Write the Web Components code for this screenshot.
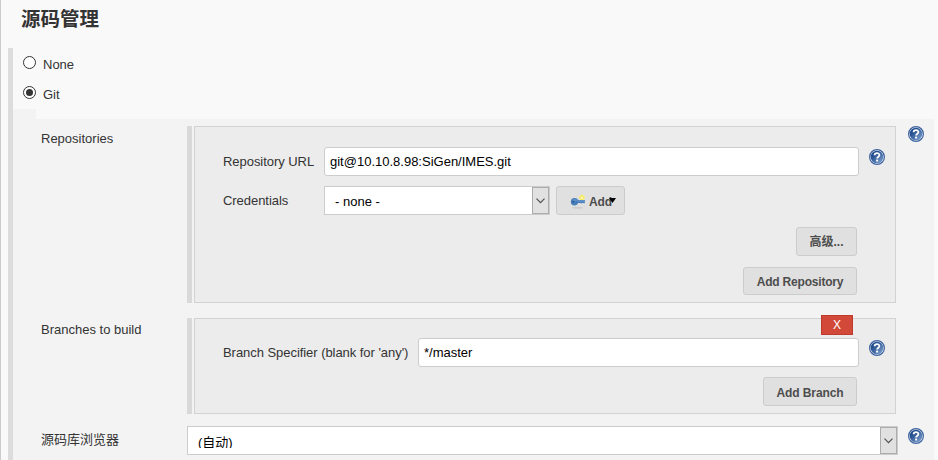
<!DOCTYPE html>
<html lang="zh"><head><meta charset="utf-8"><title>源码管理</title>
<style>
html,body{margin:0;height:460px;overflow:hidden;background:#f9f9f9}
body{font:13px/18px "Liberation Sans","Noto Sans CJK SC",sans-serif;color:#333}
</style></head><body>
<scm-page></scm-page>
<script>
const define = (name, html) => customElements.define(name, class extends HTMLElement {
  constructor() {
    super();
    const t = document.createElement('template');
    t.innerHTML = html;
    this.attachShadow({mode: 'open'}).append(t.content.cloneNode(true));
  }
});

define('help-icon', `<style>:host{display:block;width:16px;height:16px}svg{display:block}</style>
<svg width="16" height="16" viewBox="0 0 16 16"><defs><linearGradient id="g" x1="0" y1="0" x2="1" y2="1"><stop offset=".3" stop-color="#254f8e"/><stop offset="1" stop-color="#86a8d4"/></linearGradient></defs>
<circle cx="8" cy="8" r="7.4" fill="#e6edf6" stroke="#3d639f" stroke-width="1.2"/><circle cx="8" cy="8" r="6.3" fill="url(#g)"/>
<path d="M5.6 6.2C5.7 3.5 10.4 3.5 10.4 6.1C10.4 7.7 8.1 7.7 8.1 9.6" fill="none" stroke="#fff" stroke-width="1.8"/><rect x="7.1" y="10.6" width="2" height="1.9" fill="#fff"/></svg>`);

define('radio-option', `<style>:host{display:flex;align-items:center;height:18px;gap:7px}
i{box-sizing:border-box;width:13px;height:13px;border:1px solid #333;border-radius:50%;background:#fff;margin-top:-4px;display:grid;place-items:center}
span{padding-top:2px}
:host([checked]) i::after{content:"";width:7px;height:7px;border-radius:50%;background:#333}</style><i></i><span><slot></slot></span>`);

define('text-field', `<style>:host{box-sizing:border-box;display:block;height:29px;border:1px solid #ccc;border-radius:3px;background:#fff;color:#000;padding:5px 5px;line-height:17px;white-space:pre}</style><slot></slot>`);

define('drop-down', `<style>:host{box-sizing:border-box;display:flex;height:29px;border:1px solid #ccc;background:#fff;color:#000}
span{flex:1;padding:var(--st,6px) 0 0 10px;line-height:17px;height:var(--sh,16px);overflow:hidden}
b{box-sizing:border-box;width:17px;border:1px solid #acacac;background:#e1e1e1;display:grid;place-items:center}</style><span><slot></slot></span>
<b><svg width="9" height="6" viewBox="0 0 9 6"><path d="M.5 .7L4.5 4.7L8.5 .7" fill="none" stroke="#505050" stroke-width="1.2"/></svg></b>`);

define('push-button', `<style>:host{box-sizing:border-box;display:flex;justify-content:center;align-items:center;height:29px;border:1px solid #ccc;border-radius:3px;background:#e0e0e0;color:#4d4d4d;font-size:12px;font-weight:bold;padding-top:2px;letter-spacing:var(--ls,0)}</style><slot></slot>`);

define('key-icon', `<style>:host{display:block;width:16px;height:16px}svg{display:block}</style>
<svg width="16" height="16"><ellipse cx="7.5" cy="13.8" rx="5.5" ry="1" fill="#cdcdcd"/><circle cx="12" cy="3.6" r="2.8" fill="#f7ee8a"/><path d="M12 .6L12.9 2.5L15 3.6L12.9 4.6L12 6.6L11.1 4.6L9 3.6L11.1 2.5Z" fill="#f3e13c"/><circle cx="12" cy="3.6" r="1.2" fill="#fffcc8"/>
<path d="M4.6 3.9C6.4 3.9 7.6 4.8 8.2 6.1H14.8V9.3H13.6L12.6 8.8L11.6 9.4L10.4 9H8.2C7.6 10.5 6.2 11.5 4.6 11.5A3.8 3.8 0 0 1 4.6 3.9Z" fill="#477db9"/><path d="M3 6H7.4L8.5 7H14.2" fill="none" stroke="#75a0d2"/><circle cx="3.3" cy="7.8" r="1" fill="#2c5c94"/></svg>`);

define('delete-button', `<style>:host{box-sizing:border-box;display:block;width:32px;height:20px;border:1px solid #bd3b2d;background:#d24939;color:#fff;font-size:12px;line-height:18px;text-align:center}</style><slot></slot>`);

define('repeat-box', `<style>:host{display:flex;gap:2px;width:709px}
.bar{width:5px;background:#d9d9d9}
.box{box-sizing:border-box;flex:1;border:1px solid #d2d2d2;background:#ececec;padding:var(--pt,20px) 10px 7px 28px;display:flex;flex-direction:column}</style>
<div class="bar"></div><div class="box"><slot></slot></div>`);

define('config-row', `<style>:host{display:grid;grid-template-columns:146px 711px 26px;align-items:start}
.l{padding-top:var(--lt,4px)}
.h{padding:var(--ht,0) 0 0 10px}</style><div class="l"><slot name="label"></slot></div><slot></slot><div class="h"><slot name="help"></slot></div>`);

define('scm-page', `<style>
:host{box-sizing:border-box;display:block;width:938px;height:460px;border-left:1px solid #ccc;padding:6px 0 0 7px;overflow:hidden}
h1{margin:0;padding-left:13px;font:bold 19.5px/27px "Liberation Sans","Noto Sans CJK SC",sans-serif;height:42px;color:#333}
main{border-left:5px solid #dcdcdc;height:412px;box-sizing:border-box}
.choices{padding:7px 0 0 10px;height:54px;display:grid;row-gap:12px;align-content:start}
.tab{width:23px;height:10px;background:#f3f3f3}
.panel{width:921px;height:341px;background:#f3f3f3;box-sizing:border-box;padding:7px 0 0 28px;display:grid;align-content:start}
.repo{height:177px;margin-bottom:15px}.branch{height:96px;margin-bottom:12px;--lt:3px}
.browser{--lt:5px;--ht:2px;--st:7px;--sh:14px}
.line{display:flex;height:29px}
.line>label{width:101px;padding-top:6px;white-space:nowrap;letter-spacing:-.05px}
.line>label.wide{width:195px}
.line help-icon{margin:2px 0 0 10px}
.right{margin-left:auto;margin-right:28px}
delete-button{margin:-4px 32px 3px auto}
</style>
<h1>源码管理</h1><main><div class="choices"><radio-option>None</radio-option><radio-option checked>Git</radio-option></div><div class="tab"></div>
<div class="panel">
<config-row class="repo"><span slot="label">Repositories</span><repeat-box style="height:177px">
 <div class="line"><label>Repository URL</label><text-field style="width:535px">git@10.10.8.98:SiGen/IMES.git</text-field><help-icon></help-icon></div>
 <div class="line" style="margin-top:10px"><label>Credentials</label><drop-down style="width:226px">- none -</drop-down><push-button style="width:69px;margin-left:6px;justify-content:flex-start;padding-left:13px;--ls:-.1px"><key-icon></key-icon><span style="margin-left:3px">Add</span><svg width="7" height="5" style="margin-left:-3px;margin-top:-3px"><path d="M0 0H7L3.5 5Z" fill="#000"/></svg></push-button></div>
 <push-button class="right" style="width:61px;margin-top:12px">高级...</push-button>
 <push-button class="right" style="width:114px;margin-top:11px;--ls:-.2px">Add Repository</push-button>
</repeat-box><help-icon slot="help"></help-icon></config-row>
<config-row class="branch"><span slot="label">Branches to build</span><repeat-box style="height:96px;--pt:0px">
 <delete-button>X</delete-button>
 <div class="line"><label class="wide">Branch Specifier (blank for 'any')</label><text-field style="width:441px">*/master</text-field><help-icon></help-icon></div>
 <push-button class="right" style="width:94px;margin-top:10px;--ls:-.1px">Add Branch</push-button>
</repeat-box></config-row>
<config-row class="browser"><span slot="label">源码库浏览器</span><drop-down>(自动)</drop-down><help-icon slot="help"></help-icon></config-row>
</div></main>`);
</script></body></html>
